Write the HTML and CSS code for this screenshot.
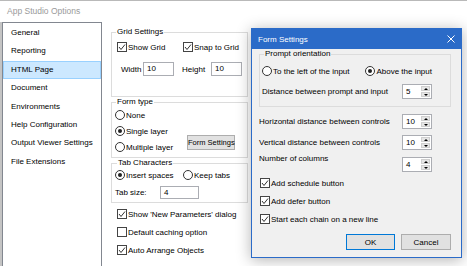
FILE: index.html
```html
<!DOCTYPE html>
<html lang="en">
<head>
    <meta charset="UTF-8">
    <meta name="viewport" content="width=device-width, initial-scale=1.0">
    <title>App Studio Options</title>
    <link rel="stylesheet" href="styles.css">
</head>
<body>
    <div class="window">
        <div class="titlebar">App Studio Options</div>
        <div class="window-body">
            <ul class="nav">
                <li>General</li>
                <li>Reporting</li>
                <li class="active">HTML Page</li>
                <li>Document</li>
                <li>Environments</li>
                <li>Help Configuration</li>
                <li>Output Viewer Settings</li>
                <li>File Extensions</li>
            </ul>

            <div class="page">
                <fieldset class="group group-grid">
                    <legend>Grid Settings</legend>
                    <div class="row">
                        <label class="check w66"><span class="box"><svg viewBox="0 0 8 8"><path d="M1 4 L3 6.5 L7 1.5"/></svg></span>Show Grid</label>
                        <label class="check"><span class="box"><svg viewBox="0 0 8 8"><path d="M1 4 L3 6.5 L7 1.5"/></svg></span>Snap to Grid</label>
                    </div>
                    <div class="row size-row">
                        <span class="lbl-w">Width</span>
                        <span class="text w31">10</span>
                        <span class="lbl-h">Height</span>
                        <span class="text w31">10</span>
                    </div>
                </fieldset>

                <fieldset class="group group-form">
                    <legend>Form type</legend>
                    <div class="ft">
                        <div class="ft-col">
                            <label class="radio"><span class="dot"></span>None</label>
                            <label class="radio on"><span class="dot"></span>Single layer</label>
                            <label class="radio"><span class="dot"></span>Multiple layer</label>
                        </div>
                        <button class="btn btn-form">Form Settings</button>
                    </div>
                </fieldset>

                <fieldset class="group group-tab">
                    <legend>Tab Characters</legend>
                    <div class="row">
                        <label class="radio on w68"><span class="dot"></span>Insert spaces</label>
                        <label class="radio"><span class="dot"></span>Keep tabs</label>
                    </div>
                    <div class="row tab-row">
                        <span class="lbl-tab">Tab size:</span>
                        <span class="text w39">4</span>
                    </div>
                </fieldset>

                <div class="opts">
                    <label class="check"><span class="box"><svg viewBox="0 0 8 8"><path d="M1 4 L3 6.5 L7 1.5"/></svg></span>Show 'New Parameters' dialog</label>
                    <label class="check"><span class="box"></span>Default caching option</label>
                    <label class="check"><span class="box"><svg viewBox="0 0 8 8"><path d="M1 4 L3 6.5 L7 1.5"/></svg></span>Auto Arrange Objects</label>
                </div>
            </div>
        </div>

        <div class="dialog">
            <div class="dialog-title">
                <span>Form Settings</span>
                <svg class="close" width="8" height="8" viewBox="0 0 8 8">
                    <path d="M0.5 0.5 L7.5 7.5 M7.5 0.5 L0.5 7.5" stroke="#fff" stroke-width="1" fill="none"/>
                </svg>
            </div>
            <div class="dialog-body">
                <fieldset class="group group-prompt">
                    <legend>Prompt orientation</legend>
                    <div class="row">
                        <label class="radio w113"><span class="dot"></span>To the left of the input</label>
                        <label class="radio on"><span class="dot"></span>Above the input</label>
                    </div>
                    <div class="srow dist-row">
                        <span>Distance between prompt and input</span>
                        <span class="spin"><span class="val">5</span><span class="arrows"><span class="up"></span><span class="down"></span></span></span>
                    </div>
                </fieldset>

                <div class="fields">
                    <div class="srow hz-row">
                        <span>Horizontal distance between controls</span>
                        <span class="spin"><span class="val">10</span><span class="arrows"><span class="up"></span><span class="down"></span></span></span>
                    </div>
                    <div class="srow vt-row">
                        <span>Vertical distance between controls</span>
                        <span class="spin"><span class="val">10</span><span class="arrows"><span class="up"></span><span class="down"></span></span></span>
                    </div>
                    <div class="srow srow-top">
                        <span class="lbl-top">Number of columns</span>
                        <span class="spin"><span class="val">4</span><span class="arrows"><span class="up"></span><span class="down"></span></span></span>
                    </div>
                </div>

                <div class="dlg-opts">
                    <label class="check"><span class="box"><svg viewBox="0 0 8 8"><path d="M1 4 L3 6.5 L7 1.5"/></svg></span>Add schedule button</label>
                    <label class="check"><span class="box"><svg viewBox="0 0 8 8"><path d="M1 4 L3 6.5 L7 1.5"/></svg></span>Add defer button</label>
                    <label class="check"><span class="box"><svg viewBox="0 0 8 8"><path d="M1 4 L3 6.5 L7 1.5"/></svg></span>Start each chain on a new line</label>
                </div>

                <div class="actions">
                    <button class="btn btn-ok">OK</button>
                    <button class="btn btn-cancel">Cancel</button>
                </div>
            </div>
        </div>
    </div>
</body>
</html>
```

FILE: styles.css
```css
* {
    box-sizing: border-box;
}
body {
    margin: 0;
    width: 467px;
    height: 266px;
    overflow: hidden;
    background: #fff;
    font-family: "Liberation Sans", Arial, sans-serif;
    font-size: 8px;
    color: #000;
}
.window {
    position: relative;
    height: 266px;
    border-top: 1px solid #b9b9b9;
}
.titlebar {
    height: 21px;
    line-height: 21px;
    padding-left: 7px;
    color: #9a9a9a;
    font-size: 8.5px;
}
.window-body {
    display: flex;
    height: 244px;
    border-left: 2px solid #c4c4c4;
}

/* left list */
.nav {
    list-style: none;
    margin: 0;
    padding: 1px 0 0;
    width: 100px;
    flex: none;
    border: 1px solid #828790;
    border-bottom: none;
}
.nav li {
    height: 18.4px;
    line-height: 18.4px;
    padding-left: 8px;
    white-space: nowrap;
}
.nav li.active {
    background: #cce8ff;
    border: 1px solid #99d1ff;
    padding-left: 7px;
    line-height: 16.4px;
}

/* page */
.page {
    padding: 5px 0 0 9px;
}
.group {
    margin: 0;
    min-width: 0;
    border: 1px solid #dcdcdc;
}
.group legend {
    padding: 0 1px;
    line-height: 10px;
}
.group-grid,
.group-form,
.group-tab {
    width: 137px;
}
.group-grid {
    padding: 4px 0 20px 5px;
}
.group-grid legend {
    margin-left: -1px;
}
.group-form {
    padding: 2px 12px 4px 3px;
}
.group-form legend {
    margin-left: 1px;
}
.group-tab {
    padding: 1px 0 3px 3px;
}
.group-tab legend {
    margin-left: 2px;
}

.row {
    display: flex;
    align-items: center;
    height: 12px;
    white-space: nowrap;
}
.w66 { width: 66px; }
.w68 { width: 68px; }
.w113 { width: 113px; }

.size-row {
    height: 14px;
    margin-top: 9px;
    padding-left: 4px;
}
.lbl-w { width: 22px; }
.lbl-h { width: 29px; margin-left: 8px; }
.tab-row {
    height: 13px;
    margin-top: 5px;
}
.lbl-tab { width: 45px; }

.text {
    display: block;
    height: 14px;
    border: 1px solid #abadb3;
    background: #fff;
    padding-left: 3px;
    line-height: 12px;
}
.tab-row .text {
    height: 13px;
    line-height: 11px;
}
.w31 { width: 31px; }
.w39 { width: 39px; }

/* check boxes and radios */
.check,
.radio {
    display: flex;
    align-items: center;
    height: 12px;
    white-space: nowrap;
}
.box {
    flex: none;
    width: 10px;
    height: 10px;
    margin-right: 1px;
    border: 1px solid #444;
    background: #fff;
}
.box svg {
    display: block;
    width: 8px;
    height: 8px;
    fill: none;
    stroke: #333;
    stroke-width: 1;
}
.dot {
    flex: none;
    width: 10px;
    height: 10px;
    margin-right: 1px;
    border: 1px solid #333;
    border-radius: 50%;
    background: #fff;
}
.radio.on .dot::after {
    content: "";
    display: block;
    width: 4px;
    height: 4px;
    margin: 2px;
    border-radius: 50%;
    background: #222;
}

.ft {
    display: flex;
}
.ft-col {
    display: flex;
    flex-direction: column;
    gap: 4px;
}

.btn {
    font-family: inherit;
    font-size: 8px;
    color: #000;
    padding: 0;
    white-space: nowrap;
    border: 1px solid #adadad;
    background: #e1e1e1;
}
.btn-form {
    width: 48px;
    height: 15px;
    margin: 0 0 3px auto;
    align-self: flex-end;
    font-size: 7.5px;
}

.opts {
    display: flex;
    flex-direction: column;
    gap: 6px;
    margin: 5px 0 0 6px;
}

/* form settings dialog */
.dialog {
    position: absolute;
    left: 251px;
    top: 27px;
    width: 211px;
    background: #f0f0f0;
    border: 1px solid #2b6bc8;
    box-shadow: 0 2px 14px rgba(0, 0, 0, 0.3);
}
.dialog-title {
    display: flex;
    align-items: center;
    height: 20px;
    padding: 0 6px;
    background: #2b6bc8;
    color: #fff;
}
.close {
    margin-left: auto;
}
.dialog-body {
    padding: 0 10px 7px 7px;
}
.group-prompt {
    padding: 6px 18px 7px 2px;
}
.group-prompt legend {
    margin-left: 2px;
}
.srow {
    display: flex;
    align-items: center;
    justify-content: space-between;
    height: 15px;
    white-space: nowrap;
}
.dist-row {
    margin-top: 7px;
}
.fields {
    margin-right: 19px;
}
.hz-row {
    margin-top: 7px;
}
.vt-row {
    margin-top: 6px;
}
.srow-top {
    align-items: flex-start;
    height: 18px;
    margin-top: 4px;
}
.lbl-top {
    line-height: 10px;
}
.srow-top .spin {
    margin-top: 3px;
}

.spin {
    display: flex;
    width: 30px;
    height: 15px;
    border: 1px solid #abadb3;
    background: #fff;
}
.spin .val {
    width: 19px;
    padding-left: 3px;
    line-height: 13px;
}
.arrows {
    display: flex;
    flex-direction: column;
    gap: 1px;
    width: 10px;
    padding: 1px 1px 1px 0;
}
.arrows span {
    flex: 1;
    display: flex;
    align-items: center;
    justify-content: center;
    background: #e6e6e6;
    border: 1px solid #cfcfcf;
}
.arrows .up::after {
    content: "";
    border-left: 2px solid transparent;
    border-right: 2px solid transparent;
    border-bottom: 2px solid #000;
}
.arrows .down::after {
    content: "";
    border-left: 2px solid transparent;
    border-right: 2px solid transparent;
    border-top: 2px solid #000;
}

.dlg-opts {
    display: flex;
    flex-direction: column;
    gap: 6px;
    margin: 5px 0 0 1px;
}
.actions {
    display: flex;
    justify-content: flex-end;
    gap: 6px;
    margin-top: 9px;
}
.btn-ok {
    width: 49px;
    height: 16px;
    border-color: #0078d7;
}
.btn-cancel {
    width: 50px;
    height: 16px;
}
```
